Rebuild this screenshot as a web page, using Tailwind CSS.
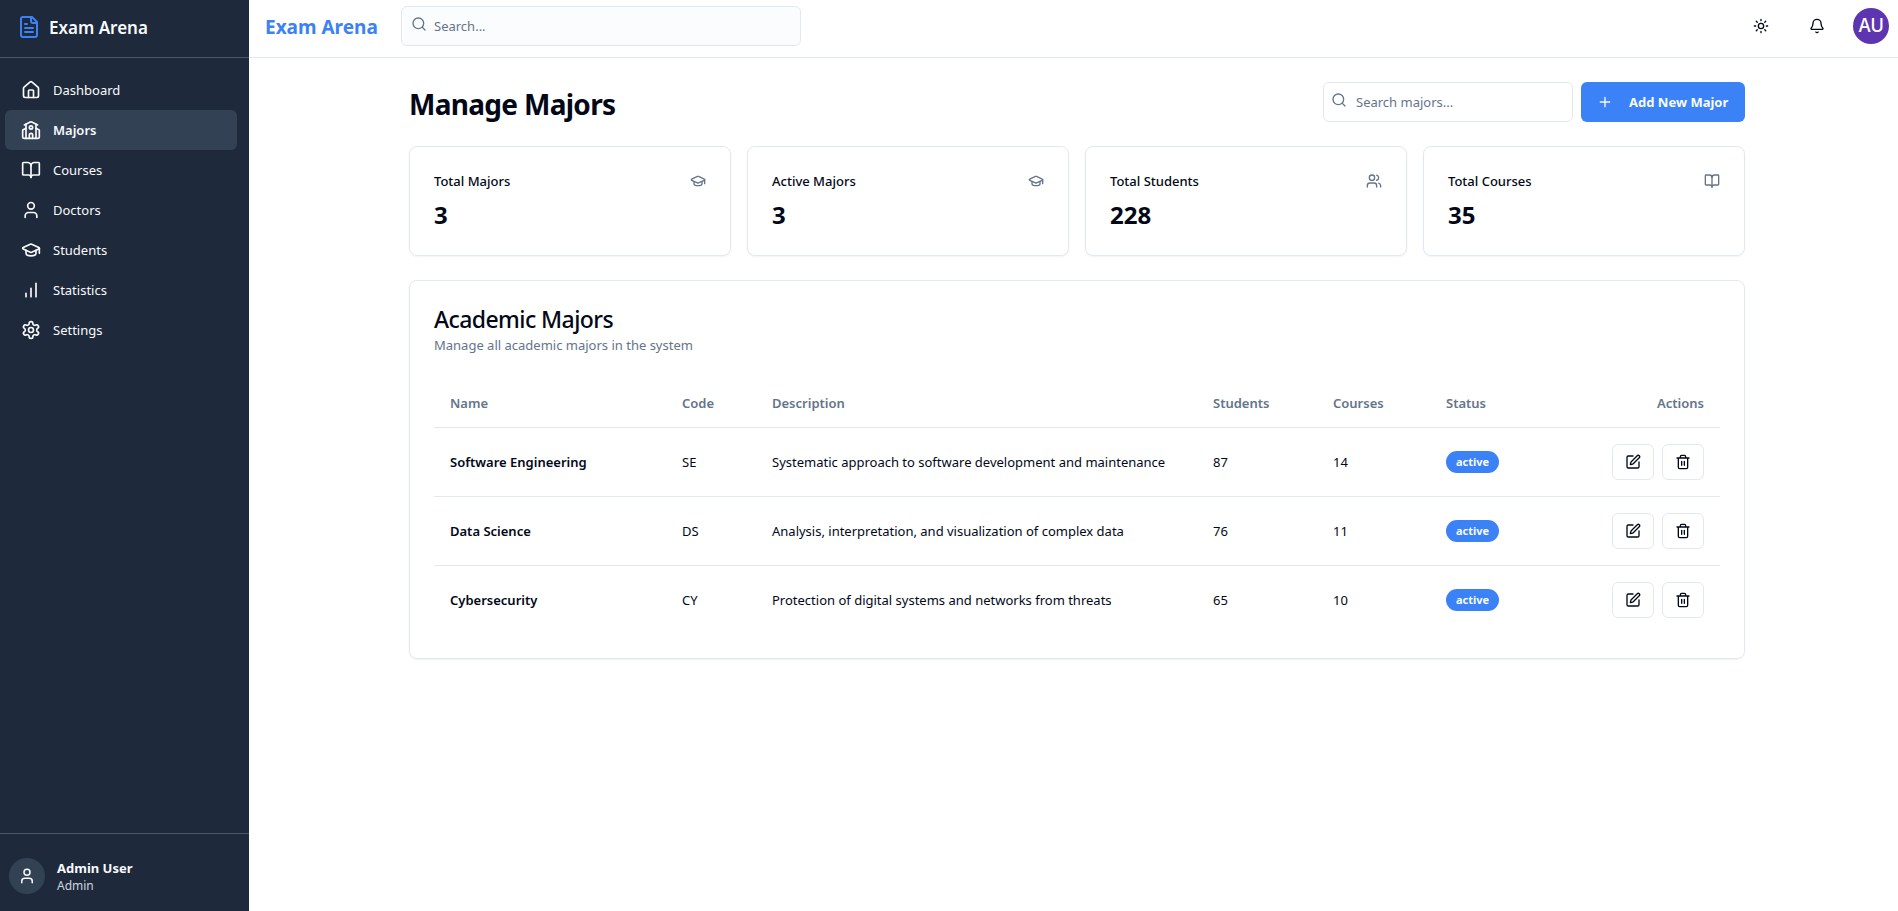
<!DOCTYPE html>
<html lang="en">
<head>
<meta charset="utf-8">
<meta name="viewport" content="width=device-width, initial-scale=1">
<title>Exam Arena</title>
<script src="https://cdn.jsdelivr.net/npm/@tailwindcss/browser@4"></script>
</head>
<body class="bg-white text-[#020817] font-['Segoe_UI','Noto_Sans','Open_Sans',sans-serif] text-[13px] leading-5">
<svg class="hidden" aria-hidden="true">
  <symbol id="file" viewBox="0 0 24 24"><path d="M15 2H6a2 2 0 0 0-2 2v16a2 2 0 0 0 2 2h12a2 2 0 0 0 2-2V7Z"/><path d="M14 2v4a2 2 0 0 0 2 2h4M10 9H8M16 13H8M16 17H8"/></symbol>
  <symbol id="house" viewBox="0 0 24 24"><path d="M15 21v-8a1 1 0 0 0-1-1h-4a1 1 0 0 0-1 1v8"/><path d="M3 10a2 2 0 0 1 .709-1.528l7-5.999a2 2 0 0 1 2.582 0l7 5.999A2 2 0 0 1 21 10v9a2 2 0 0 1-2 2H5a2 2 0 0 1-2-2z"/></symbol>
  <symbol id="school" viewBox="0 0 24 24"><path d="M14 22v-4a2 2 0 1 0-4 0v4"/><path d="m18 10 3.447 1.724a1 1 0 0 1 .553.894V20a2 2 0 0 1-2 2H4a2 2 0 0 1-2-2v-7.382a1 1 0 0 1 .553-.894L6 10"/><path d="M18 5v17M6 5v17"/><path d="m4 6 7.106-3.553a2 2 0 0 1 1.788 0L20 6"/><circle cx="12" cy="9" r="2"/></symbol>
  <symbol id="book" viewBox="0 0 24 24"><path d="M12 7v14"/><path d="M3 18a1 1 0 0 1-1-1V4a1 1 0 0 1 1-1h5a4 4 0 0 1 4 4 4 4 0 0 1 4-4h5a1 1 0 0 1 1 1v13a1 1 0 0 1-1 1h-6a3 3 0 0 0-3 3 3 3 0 0 0-3-3z"/></symbol>
  <symbol id="user" viewBox="0 0 24 24"><path d="M19 21v-2a4 4 0 0 0-4-4H9a4 4 0 0 0-4 4v2"/><circle cx="12" cy="7" r="4"/></symbol>
  <symbol id="users" viewBox="0 0 24 24"><path d="M16 21v-2a4 4 0 0 0-4-4H6a4 4 0 0 0-4 4v2"/><circle cx="9" cy="7" r="4"/><path d="M22 21v-2a4 4 0 0 0-3-3.87M16 3.13a4 4 0 0 1 0 7.75"/></symbol>
  <symbol id="cap" viewBox="0 0 24 24"><path d="M21.42 10.922a1 1 0 0 0-.019-1.838L12.83 5.18a2 2 0 0 0-1.66 0L2.6 9.08a1 1 0 0 0 0 1.832l8.57 3.908a2 2 0 0 0 1.66 0z"/><path d="M22 10v6"/><path d="M6 12.5V16a6 3 0 0 0 12 0v-3.5"/></symbol>
  <symbol id="chart" viewBox="0 0 24 24"><path d="M12 20V10M18 20V4M6 20v-4"/></symbol>
  <symbol id="gear" viewBox="0 0 24 24"><path d="M12.22 2h-.44a2 2 0 0 0-2 2v.18a2 2 0 0 1-1 1.73l-.43.25a2 2 0 0 1-2 0l-.15-.08a2 2 0 0 0-2.73.73l-.22.38a2 2 0 0 0 .73 2.73l.15.1a2 2 0 0 1 1 1.72v.51a2 2 0 0 1-1 1.74l-.15.09a2 2 0 0 0-.73 2.73l.22.38a2 2 0 0 0 2.73.73l.15-.08a2 2 0 0 1 2 0l.43.25a2 2 0 0 1 1 1.73V20a2 2 0 0 0 2 2h.44a2 2 0 0 0 2-2v-.18a2 2 0 0 1 1-1.73l.43-.25a2 2 0 0 1 2 0l.15.08a2 2 0 0 0 2.73-.73l.22-.39a2 2 0 0 0-.73-2.73l-.15-.08a2 2 0 0 1-1-1.74v-.5a2 2 0 0 1 1-1.74l.15-.09a2 2 0 0 0 .73-2.73l-.22-.38a2 2 0 0 0-2.73-.73l-.15.08a2 2 0 0 1-2 0l-.43-.25a2 2 0 0 1-1-1.73V4a2 2 0 0 0-2-2z"/><circle cx="12" cy="12" r="3"/></symbol>
  <symbol id="search" viewBox="0 0 24 24"><circle cx="11" cy="11" r="8"/><path d="m21 21-4.3-4.3"/></symbol>
  <symbol id="sun" viewBox="0 0 24 24"><circle cx="12" cy="12" r="4"/><path d="M12 2v2M12 20v2M4.93 4.93l1.41 1.41M17.66 17.66l1.41 1.41M2 12h2M20 12h2M6.34 17.66l-1.41 1.41M19.07 4.93l-1.41 1.41"/></symbol>
  <symbol id="bell" viewBox="0 0 24 24"><path d="M10.268 21a2 2 0 0 0 3.464 0"/><path d="M3.262 15.326A1 1 0 0 0 4 17h16a1 1 0 0 0 .74-1.673C19.41 13.956 18 12.499 18 8A6 6 0 0 0 6 8c0 4.499-1.411 5.956-2.738 7.326"/></symbol>
  <symbol id="plus" viewBox="0 0 24 24"><path d="M5 12h14M12 5v14"/></symbol>
  <symbol id="edit" viewBox="0 0 24 24"><path d="M12 3H5a2 2 0 0 0-2 2v14a2 2 0 0 0 2 2h14a2 2 0 0 0 2-2v-7"/><path d="M18.375 2.625a1 1 0 0 1 3 3l-9.013 9.014a2 2 0 0 1-.853.505l-2.873.84a.5.5 0 0 1-.62-.62l.84-2.873a2 2 0 0 1 .506-.852z"/></symbol>
  <symbol id="trash" viewBox="0 0 24 24"><path d="M3 6h18M19 6v14c0 1-1 2-2 2H7c-1 0-2-1-2-2V6M8 6V4c0-1 1-2 2-2h4c1 0 2 1 2 2v2M10 11v6M14 11v6"/></symbol>
</svg>

<div class="flex min-h-screen">
  <aside class="flex w-[249px] shrink-0 flex-col bg-[#1e293b] text-[#f8fafc]">
    <div class="flex h-[58px] items-center gap-2 border-b border-[#475569] px-[17px] pb-1">
      <svg class="size-6 fill-none stroke-[#3b82f6] stroke-2 [stroke-linecap:round] [stroke-linejoin:round]"><use href="#file"/></svg>
      <span class="pt-0.5 text-[17px] font-semibold">Exam Arena</span>
    </div>
    <nav class="flex flex-col pt-3 pr-3 pl-[5px] [&_a]:flex [&_a]:h-10 [&_a]:items-center [&_a]:gap-3 [&_a]:rounded-md [&_a]:px-4 [&_svg]:size-5 [&_svg]:fill-none [&_svg]:stroke-current [&_svg]:stroke-2 [&_svg]:[stroke-linecap:round] [&_svg]:[stroke-linejoin:round]">
      <a href="#"><svg><use href="#house"/></svg>Dashboard</a>
      <a href="#" class="bg-[#334155] font-semibold" aria-current="page"><svg><use href="#school"/></svg>Majors</a>
      <a href="#"><svg><use href="#book"/></svg>Courses</a>
      <a href="#"><svg><use href="#user"/></svg>Doctors</a>
      <a href="#"><svg><use href="#cap"/></svg>Students</a>
      <a href="#"><svg><use href="#chart"/></svg>Statistics</a>
      <a href="#"><svg><use href="#gear"/></svg>Settings</a>
    </nav>
    <div class="mt-auto flex h-[78px] items-center gap-3 border-t border-[#475569] pt-1.5 pl-[9px]">
      <span class="flex size-9 items-center justify-center rounded-full bg-[#334155]"><svg class="size-[18px] fill-none stroke-current stroke-2 [stroke-linecap:round] [stroke-linejoin:round]"><use href="#user"/></svg></span>
      <div>
        <p class="font-bold">Admin User</p>
        <p class="text-xs text-[#cbd5e1]">Admin</p>
      </div>
    </div>
  </aside>

  <div class="min-w-0 flex-1">
    <header class="flex h-[58px] items-center border-b border-[#e2e8f0] pr-[9px] pb-[5px] pl-4">
      <span class="w-[136px] pt-0.5 text-[19px] font-bold text-[#3b82f6]">Exam Arena</span>
      <div class="relative w-[400px]">
        <svg class="absolute top-2.5 left-2.5 size-4 fill-none stroke-[#64748b] stroke-2 [stroke-linecap:round] [stroke-linejoin:round]"><use href="#search"/></svg>
        <input type="search" aria-label="Search" placeholder="Search..." class="h-10 w-full rounded-md border border-[#e2e8f0] bg-[#fbfcfe] pr-3 pl-8 placeholder:text-[#64748b]">
      </div>
      <div class="ml-auto flex items-center gap-4">
        <button class="flex size-10 items-center justify-center rounded-md" aria-label="Toggle theme"><svg class="size-4 fill-none stroke-current stroke-2 [stroke-linecap:round] [stroke-linejoin:round]"><use href="#sun"/></svg></button>
        <button class="flex size-10 items-center justify-center rounded-md" aria-label="Notifications"><svg class="size-4 fill-none stroke-current stroke-2 [stroke-linecap:round] [stroke-linejoin:round]"><use href="#bell"/></svg></button>
        <button class="flex size-9 items-center justify-center rounded-full bg-[#5e35b1] font-['Inter',sans-serif] text-[18px] font-medium text-white" aria-label="Account">AU</button>
      </div>
    </header>

    <main class="pl-[7px]">
      <div class="mx-auto flex max-w-[1400px] flex-col gap-6 px-8 py-6">
        <div class="flex items-center justify-between">
          <h1 class="pt-1 text-[28px] leading-9 font-bold tracking-tight">Manage Majors</h1>
          <div class="flex gap-2">
            <div class="relative w-[250px]">
              <svg class="absolute top-2.5 left-2 size-4 fill-none stroke-[#64748b] stroke-2 [stroke-linecap:round] [stroke-linejoin:round]"><use href="#search"/></svg>
              <input type="search" aria-label="Search majors" placeholder="Search majors..." class="h-10 w-full rounded-md border border-[#e2e8f0] pr-3 pl-8 placeholder:text-[#64748b]">
            </div>
            <button class="flex h-10 w-[164px] items-center gap-4 rounded-md bg-[#3b82f6] px-4 font-bold whitespace-nowrap text-[#f8fafc]"><svg class="size-4 shrink-0 fill-none stroke-current stroke-2 [stroke-linecap:round] [stroke-linejoin:round]"><use href="#plus"/></svg>Add New Major</button>
          </div>
        </div>

        <div class="grid grid-cols-4 gap-4 [&_h2]:font-medium [&_section]:h-[110px] [&_section]:rounded-lg [&_section]:border [&_section]:border-[#e2e8f0] [&_section]:p-6 [&_section]:shadow-xs [&_svg]:size-4 [&_svg]:fill-none [&_svg]:stroke-[#64748b] [&_svg]:stroke-2 [&_svg]:[stroke-linecap:round] [&_svg]:[stroke-linejoin:round]">
          <section><div class="flex items-center justify-between pb-2"><h2>Total Majors</h2><svg><use href="#cap"/></svg></div><p class="text-2xl font-bold">3</p></section>
          <section><div class="flex items-center justify-between pb-2"><h2>Active Majors</h2><svg><use href="#cap"/></svg></div><p class="text-2xl font-bold">3</p></section>
          <section><div class="flex items-center justify-between pb-2"><h2>Total Students</h2><svg><use href="#users"/></svg></div><p class="text-2xl font-bold">228</p></section>
          <section><div class="flex items-center justify-between pb-2"><h2>Total Courses</h2><svg><use href="#book"/></svg></div><p class="text-2xl font-bold">35</p></section>
        </div>

        <section class="rounded-lg border border-[#e2e8f0] p-6 shadow-xs">
          <h2 class="pt-0.5 text-[23px] leading-6 font-medium tracking-tight">Academic Majors</h2>
          <p class="mt-1 mb-6 text-[#64748b]">Manage all academic majors in the system</p>
          <table class="w-full table-fixed text-left [&_button]:flex [&_button]:h-9 [&_button]:w-[42px] [&_button]:items-center [&_button]:justify-center [&_button]:rounded-md [&_button]:border [&_button]:border-[#e2e8f0] [&_svg]:size-4 [&_svg]:fill-none [&_svg]:stroke-current [&_svg]:stroke-2 [&_svg]:[stroke-linecap:round] [&_svg]:[stroke-linejoin:round] [&_td]:p-4 [&_th]:px-4 [&_th]:font-semibold">
            <thead>
              <tr class="h-12 border-b border-[#e2e8f0] text-[#64748b]">
                <th class="w-[232px]">Name</th><th class="w-[90px]">Code</th><th>Description</th><th class="w-[120px]">Students</th><th class="w-[113px]">Courses</th><th class="w-[107px]">Status</th><th class="w-[183px] text-right">Actions</th>
              </tr>
            </thead>
            <tbody>
              <tr class="border-b border-[#e2e8f0]">
                <td class="font-semibold">Software Engineering</td><td>SE</td><td>Systematic approach to software development and maintenance</td><td>87</td><td>14</td>
                <td><span class="flex h-[22px] w-[53px] items-center justify-center rounded-full bg-[#3b82f6] text-[11px] font-bold text-[#f8fafc]">active</span></td>
                <td><div class="flex justify-end gap-2"><button aria-label="Edit Software Engineering"><svg><use href="#edit"/></svg></button><button aria-label="Delete Software Engineering"><svg><use href="#trash"/></svg></button></div></td>
              </tr>
              <tr class="border-b border-[#e2e8f0]">
                <td class="font-semibold">Data Science</td><td>DS</td><td>Analysis, interpretation, and visualization of complex data</td><td>76</td><td>11</td>
                <td><span class="flex h-[22px] w-[53px] items-center justify-center rounded-full bg-[#3b82f6] text-[11px] font-bold text-[#f8fafc]">active</span></td>
                <td><div class="flex justify-end gap-2"><button aria-label="Edit Data Science"><svg><use href="#edit"/></svg></button><button aria-label="Delete Data Science"><svg><use href="#trash"/></svg></button></div></td>
              </tr>
              <tr>
                <td class="font-semibold">Cybersecurity</td><td>CY</td><td>Protection of digital systems and networks from threats</td><td>65</td><td>10</td>
                <td><span class="flex h-[22px] w-[53px] items-center justify-center rounded-full bg-[#3b82f6] text-[11px] font-bold text-[#f8fafc]">active</span></td>
                <td><div class="flex justify-end gap-2"><button aria-label="Edit Cybersecurity"><svg><use href="#edit"/></svg></button><button aria-label="Delete Cybersecurity"><svg><use href="#trash"/></svg></button></div></td>
              </tr>
            </tbody>
          </table>
        </section>
      </div>
    </main>
  </div>
</div>
</body>
</html>
